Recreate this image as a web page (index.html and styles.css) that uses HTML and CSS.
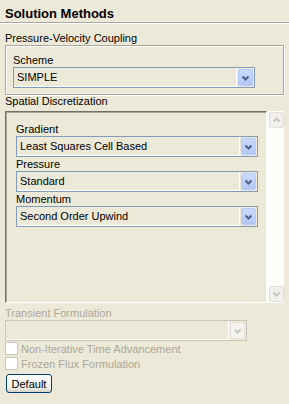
FILE: index.html
```html
<!DOCTYPE html>
<html lang="en">

<head>
  <meta charset="UTF-8" />
  <title>Solution Methods</title>
  <link rel="stylesheet" href="styles.css">
</head>

<body>
  <div class="page">
    <!-- Panel heading -->
    <div class="title">Solution Methods</div>

    <div class="section">Pressure-Velocity Coupling</div>
    <div class="group">
      <div class="label">Scheme</div>
      <div class="combo">
        <span class="value">SIMPLE</span>
        <span class="arrow-btn">
          <svg width="9" height="6" viewBox="0 0 9 6"><polyline points="1.5,1.5 4.5,4.5 7.5,1.5" fill="none" stroke="#4D6185" stroke-width="2"/></svg>
        </span>
      </div>
    </div>

    <div class="section spaced">Spatial Discretization</div>
    <div class="scroll-panel">
      <div class="scroll-content">
        <div class="field-label">Gradient</div>
        <div class="combo">
          <span class="value">Least Squares Cell Based</span>
          <span class="arrow-btn">
            <svg width="9" height="6" viewBox="0 0 9 6"><polyline points="1.5,1.5 4.5,4.5 7.5,1.5" fill="none" stroke="#4D6185" stroke-width="2"/></svg>
          </span>
        </div>
        <div class="field-label">Pressure</div>
        <div class="combo">
          <span class="value">Standard</span>
          <span class="arrow-btn">
            <svg width="9" height="6" viewBox="0 0 9 6"><polyline points="1.5,1.5 4.5,4.5 7.5,1.5" fill="none" stroke="#4D6185" stroke-width="2"/></svg>
          </span>
        </div>
        <div class="field-label">Momentum</div>
        <div class="combo">
          <span class="value">Second Order Upwind</span>
          <span class="arrow-btn">
            <svg width="9" height="6" viewBox="0 0 9 6"><polyline points="1.5,1.5 4.5,4.5 7.5,1.5" fill="none" stroke="#4D6185" stroke-width="2"/></svg>
          </span>
        </div>
      </div>
      <!-- Disabled vertical scrollbar -->
      <div class="scrollbar">
        <span class="sb-btn">
          <svg width="9" height="6" viewBox="0 0 9 6"><polyline points="1.5,4.5 4.5,1.5 7.5,4.5" fill="none" stroke="#C9C7BA" stroke-width="2"/></svg>
        </span>
        <span class="sb-btn">
          <svg width="9" height="6" viewBox="0 0 9 6"><polyline points="1.5,1.5 4.5,4.5 7.5,1.5" fill="none" stroke="#C9C7BA" stroke-width="2"/></svg>
        </span>
      </div>
    </div>

    <div class="section disabled gap">Transient Formulation</div>
    <div class="combo off">
      <span class="value"></span>
      <span class="arrow-btn">
        <svg width="9" height="6" viewBox="0 0 9 6"><polyline points="1.5,1.5 4.5,4.5 7.5,1.5" fill="none" stroke="#C9C7BA" stroke-width="2"/></svg>
      </span>
    </div>

    <div class="check-row"><span class="check"></span>Non-Iterative Time Advancement</div>
    <div class="check-row"><span class="check"></span>Frozen Flux Formulation</div>

    <button class="btn" type="button">Default</button>
  </div>
</body>

</html>
```

FILE: styles.css
```css
/* Whole panel */
body {
  margin: 0;
  background: #ECE9D8;
  font: 11px "Liberation Sans", Arial, sans-serif;
  color: #000;
}

.page {
  width: 289px;
  height: 404px;
  padding: 0 5px;
  box-sizing: border-box;
  overflow: hidden;
}

/* Heading with etched line below */
.title {
  margin: 0 -5px;
  height: 23px;
  box-sizing: border-box;
  padding: 6px 5px 0;
  font-weight: bold;
  font-size: 13px;
  line-height: 16px;
  border-bottom: 1px solid #ACA899;
  box-shadow: 0 1px #fff;
}

.section {
  line-height: 13px;
  margin-top: 9px;
}

.section.spaced {
  margin-top: 0;
  margin-bottom: 3px;
}

.section.gap {
  margin-top: 4px;
}

.disabled,
.check-row {
  color: #ACA899;
}

/* Group box */
.group {
  border: 1px solid #ACA899;
  box-shadow: inset 1px 1px #fff, 1px 1px #fff;
  padding: 8px 0 6px 7px;
}

.label {
  line-height: 13px;
}

/* Combo box */
.combo {
  width: 242px;
  height: 21px;
  box-sizing: border-box;
  border: 1px solid #7F9DB9;
  display: flex;
  padding: 0 1px 0 0;
}

.combo .value {
  flex: 1;
  padding-left: 3px;
  line-height: 19px;
  margin-right: 1px;
  box-shadow: inset -1px -1px #fff;
  white-space: nowrap;
}

.arrow-btn {
  width: 15px;
  height: 17px;
  margin-top: 1px;
  box-sizing: border-box;
  border: 1px solid #BACCF6;
  border-radius: 2px;
  background: linear-gradient(#CAD9FD, #B3C7F6);
  display: flex;
  align-items: center;
  justify-content: center;
}

.combo.off {
  border-color: #C9C7BA;
}

.combo.off .arrow-btn {
  border-color: #E6E4DA;
  background: #F4F3EE;
}

/* Scrolling area */
.scroll-panel {
  display: flex;
  height: 192px;
}

.scroll-content {
  flex: 1;
  border-top: 1px solid #716F64;
  border-left: 1px solid #716F64;
  border-right: 1px solid #fff;
  border-bottom: 1px solid #fff;
  box-shadow: inset 1px 1px #ACA899;
  padding: 10px 0 0 10px;
}

.field-label {
  line-height: 14px;
}

.scrollbar {
  width: 17px;
  background: #FDFDFA;
  display: flex;
  flex-direction: column;
  justify-content: space-between;
}

.sb-btn {
  height: 16px;
  margin: 1px 0 1px 2px;
  box-sizing: border-box;
  border: 1px solid #E2E0D7;
  border-radius: 2px;
  background: #F1F0EA;
  display: flex;
  align-items: center;
  justify-content: center;
}

/* Disabled check boxes */
.check-row {
  display: flex;
  align-items: center;
  height: 15px;
}

.check {
  width: 13px;
  height: 13px;
  box-sizing: border-box;
  border: 1px solid #CAC8BB;
  background: #fff;
  margin-right: 3px;
}

/* Default button */
.btn {
  display: block;
  margin: 3px 0 0 1px;
  width: 46px;
  height: 19px;
  padding: 0;
  border: 1px solid #003C74;
  border-radius: 3px;
  background: linear-gradient(#fff, #F0F0EA 75%, #D8D2C6);
  font: 11px "Liberation Sans", Arial, sans-serif;
  color: #000;
}
```
